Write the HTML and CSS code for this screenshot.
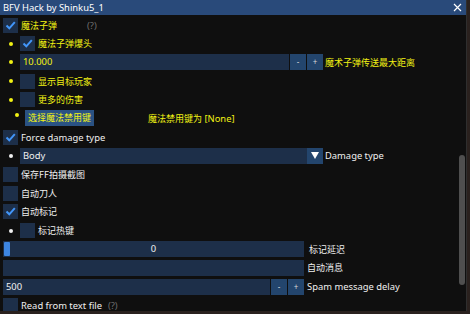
FILE: index.html
```html
<!DOCTYPE html>
<html>
<head>
<meta charset="utf-8">
<link rel="stylesheet" href="styles.css">
</head>
<body>
<div class="window">
  <div class="titlebar">
    <span class="title">BFV Hack by Shinku5_1</span>
    <svg class="close" width="9" height="9" viewBox="0 0 9 9"><path d="M1 1L8 8M8 1L1 8" stroke="#ffffff" stroke-width="1.2"/></svg>
  </div>
  <div class="main">
    <div class="content">
      <div class="row">
        <span class="cb"><svg width="11" height="11" viewBox="0 0 11 11"><path d="M1.5 5.5L4.3 8.3L9.8 2.2" fill="none" stroke="#4296fa" stroke-width="2"/></svg></span>
        <span class="label zh yellow">魔法子弹</span>
        <span class="help">(?)</span>
      </div>
      <div class="row">
        <span class="bul"><i class="dot ydot"></i></span>
        <span class="cb"><svg width="11" height="11" viewBox="0 0 11 11"><path d="M1.5 5.5L4.3 8.3L9.8 2.2" fill="none" stroke="#4296fa" stroke-width="2"/></svg></span>
        <span class="label zh yellow">魔法子弹爆头</span>
      </div>
      <div class="row">
        <span class="bul"><i class="dot ydot"></i></span>
        <span class="field f-dist yellow">10.000</span>
        <span class="btn pm">-</span>
        <span class="btn pm">+</span>
        <span class="label2 zh yellow">魔术子弹传送最大距离</span>
      </div>
      <div class="row">
        <span class="bul"><i class="dot ydot"></i></span>
        <span class="cb"></span>
        <span class="label zh yellow">显示目标玩家</span>
      </div>
      <div class="row">
        <span class="bul"><i class="dot ydot"></i></span>
        <span class="cb"></span>
        <span class="label zh yellow">更多的伤害</span>
      </div>
      <div class="row row-btn">
        <span class="bul bul-wide"><i class="dot ydot"></i></span>
        <span class="btn keybtn zh yellow">选择魔法禁用键</span>
        <span class="keyinfo yellow"><span class="zh">魔法禁用键为</span> [None]</span>
      </div>
      <div class="row">
        <span class="cb"><svg width="11" height="11" viewBox="0 0 11 11"><path d="M1.5 5.5L4.3 8.3L9.8 2.2" fill="none" stroke="#4296fa" stroke-width="2"/></svg></span>
        <span class="label">Force damage type</span>
      </div>
      <div class="row">
        <span class="bul"><i class="dot wdot"></i></span>
        <span class="field f-combo">Body</span>
        <span class="arrow"><svg width="8" height="7" viewBox="0 0 8 7"><path d="M0 0H8L4 7Z" fill="#ffffff"/></svg></span>
        <span class="label2">Damage type</span>
      </div>
      <div class="row">
        <span class="cb"></span>
        <span class="label zh">保存FF拍摄截图</span>
      </div>
      <div class="row">
        <span class="cb"></span>
        <span class="label zh">自动刀人</span>
      </div>
      <div class="row">
        <span class="cb"><svg width="11" height="11" viewBox="0 0 11 11"><path d="M1.5 5.5L4.3 8.3L9.8 2.2" fill="none" stroke="#4296fa" stroke-width="2"/></svg></span>
        <span class="label zh">自动标记</span>
      </div>
      <div class="row">
        <span class="bul"><i class="dot wdot"></i></span>
        <span class="cb"></span>
        <span class="label zh">标记热键</span>
      </div>
      <div class="row">
        <span class="field f-wide slider"><i class="grab"></i><span class="sval">0</span></span>
        <span class="label3 zh">标记延迟</span>
      </div>
      <div class="row">
        <span class="field f-wide"></span>
        <span class="label4 zh">自动消息</span>
      </div>
      <div class="row">
        <span class="field f-spam">500</span>
        <span class="btn pm">-</span>
        <span class="btn pm">+</span>
        <span class="label4">Spam message delay</span>
      </div>
      <div class="row">
        <span class="cb"></span>
        <span class="label">Read from text file</span>
        <span class="help help2">(?)</span>
      </div>
    </div>
    <div class="scroll"><div class="sgrab"></div></div>
  </div>
</div>
</body>
</html>
```

FILE: styles.css
```css
html, body {
  margin: 0;
  padding: 0;
}
body {
  width: 470px;
  height: 314px;
  overflow: hidden;
  background: #2a211e;
  font-family: "Noto Sans", "Noto Sans CJK SC", sans-serif;
  font-size: 9.4px;
  color: #f0f0f0;
}
.window {
  box-sizing: border-box;
  width: 467px;
  height: 311px;
  background: #0f0f0f;
  border-right: 1px solid #2e2e2e;
  display: flex;
  flex-direction: column;
  overflow: hidden;
}
.titlebar {
  height: 15px;
  flex: none;
  background: #294a7a;
  display: flex;
  align-items: center;
  justify-content: space-between;
  padding: 0 4px 0 3px;
}
.title {
  color: #ffffff;
  line-height: 15px;
}
.main {
  flex: 1;
  display: flex;
  min-height: 0;
}
.content {
  flex: 1;
  padding: 2px 0 0 3px;
  display: flex;
  flex-direction: column;
  gap: 2.7px;
  overflow: hidden;
}
.row {
  height: 16px;
  flex: none;
  display: flex;
  align-items: center;
  white-space: nowrap;
}
.zh {
  font-family: "Noto Sans CJK SC", sans-serif;
  font-size: 9px;
}
.yellow {
  color: #f2f214;
}
.cb {
  width: 15px;
  height: 15px;
  background: #1d2f49;
  display: flex;
  align-items: center;
  justify-content: center;
  flex: none;
}
.label {
  margin-left: 3px;
}
.help {
  margin-left: 30px;
  color: #6e6e6e;
}
.help2 {
  margin-left: 6px;
}
.bul {
  width: 17px;
  box-sizing: border-box;
  padding-left: 6px;
  display: flex;
  align-items: center;
  flex: none;
}
.bul-wide {
  width: 22px;
  padding-left: 12px;
  align-self: flex-start;
  padding-top: 3px;
}
.dot {
  display: block;
  width: 4px;
  height: 4px;
  border-radius: 50%;
}
.ydot { background: #f2f214; }
.wdot { background: #f0f0f0; }
.field {
  height: 16px;
  line-height: 16px;
  background: #1d2f49;
  box-sizing: border-box;
  padding-left: 3px;
  flex: none;
}
.f-dist { width: 269px; }
.f-combo { width: 287px; }
.f-wide { width: 301px; }
.f-spam { width: 267px; padding-left: 3px; }
.btn {
  background: #23456d;
  height: 16px;
  line-height: 16px;
  flex: none;
}
.pm {
  width: 16px;
  margin-left: 1px;
  text-align: center;
  color: #d8d8d8;
  font-size: 8px;
}
.keybtn {
  width: 69px;
  text-align: center;
  background: #2a5283;
}
.keyinfo {
  margin-left: 54px;
}
.arrow {
  width: 16px;
  height: 16px;
  background: #23456d;
  display: flex;
  align-items: center;
  justify-content: center;
  flex: none;
}
.label2 { margin-left: 2px; }
.label3 { margin-left: 5px; }
.label4 { margin-left: 3px; }
.slider {
  position: relative;
  text-align: center;
  padding-left: 0;
}
.grab {
  position: absolute;
  left: 1px;
  top: 1px;
  width: 6px;
  height: 14px;
  background: #3d85e0;
  border-radius: 1px;
}
.sval { color: #f0f0f0; }
.scroll {
  width: 7px;
  flex: none;
  padding-top: 140px;
  box-sizing: border-box;
}
.sgrab {
  width: 6px;
  height: 130px;
  background: #4f4f4f;
  border-radius: 3px;
}
```
